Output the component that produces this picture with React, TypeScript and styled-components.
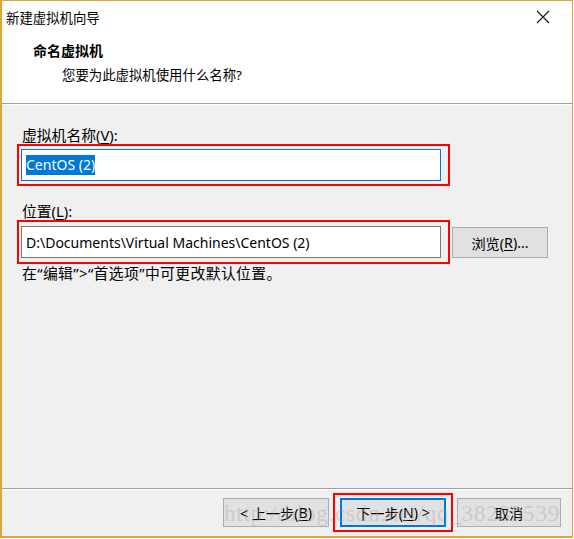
import React from "react";
import styled, { createGlobalStyle } from "styled-components";

const GlobalStyle = createGlobalStyle`
  html, body {
    margin: 0;
    padding: 0;
    background: #ffffff;
  }
  body {
    font-family: "Noto Sans", "Noto Sans CJK SC", sans-serif;
    font-size: 13px;
    color: #000;
  }
`;

const Key = ({ k }: { k: string }) => <U>{k}</U>;

const App = () => {
  return (
    <>
      <GlobalStyle />
      <Window>
        <Header>
          <TitleBar>
            <Title>新建虚拟机向导</Title>
            <CloseBtn>
              <svg width="14" height="14" viewBox="0 0 14 14">
                <path d="M1 1 L13 13 M13 1 L1 13" stroke="#111" strokeWidth="1.1" fill="none" />
              </svg>
            </CloseBtn>
          </TitleBar>
          <Heading>命名虚拟机</Heading>
          <SubHeading>您要为此虚拟机使用什么名称?</SubHeading>
        </Header>

        <Body>
          <Label>
            虚拟机名称(<Key k="V" />):
          </Label>
          <FieldRow>
            <Highlight>
              <TextBox focused>
                <Selected>CentOS (2)</Selected>
              </TextBox>
            </Highlight>
          </FieldRow>

          <Label top={16}>
            位置(<Key k="L" />):
          </Label>
          <FieldRow>
            <Highlight roomy>
              <TextBox>D:\Documents\Virtual Machines\CentOS (2)</TextBox>
            </Highlight>
            <BrowseButton>
              浏览(<Key k="R" />)...
            </BrowseButton>
          </FieldRow>
          <Note>在“编辑”&gt;“首选项”中可更改默认位置。</Note>
        </Body>

        <Footer>
          <Button width={106}>
            &lt; 上一步(<Key k="B" />)
          </Button>
          <Highlight tight>
            <Button width={106} primary>
              下一步(<Key k="N" />) &gt;
            </Button>
          </Highlight>
          <Button width={104}>取消</Button>
          <Watermark>http://blog.csdn.net/qq_38289539</Watermark>
        </Footer>
      </Window>
    </>
  );
};
export default App;

// styled-components -----------------
const Window = styled.div`
  position: relative;
  box-sizing: border-box;
  width: 573px;
  height: 538px;
  border: 1px solid #e8a23a;
  border-left-width: 2px;
  border-bottom-width: 2px;
  background: #f0f0f0;
  display: flex;
  flex-direction: column;
`;

const Header = styled.div`
  background: #fff;
  height: 102px;
  border-bottom: 1px solid #a0a0a0;
  box-shadow: 0 1px 0 #fff;
`;

const TitleBar = styled.div`
  height: 31px;
  display: flex;
  align-items: center;
  justify-content: space-between;
  padding-left: 4px;
`;

const Title = styled.div`
  font-size: 13.4px;
  color: #000;
`;

const CloseBtn = styled.div`
  width: 46px;
  height: 31px;
  display: flex;
  align-items: center;
  justify-content: center;
  margin-right: 6px;
`;

const Heading = styled.div`
  margin: 9px 0 0 31px;
  font-size: 14px;
  font-weight: bold;
  line-height: 20px;
`;

const SubHeading = styled.div`
  margin: 4px 0 0 60px;
  font-size: 13.4px;
  line-height: 20px;
`;

const Body = styled.div`
  flex: 1;
  padding: 22px 0 0 15px;
  display: flex;
  flex-direction: column;
`;

const Label = styled.div<{ top?: number }>`
  margin: ${(p) => p.top || 0}px 0 0 5px;
  font-size: 14.8px;
  line-height: 18px;
`;

const FieldRow = styled.div`
  display: flex;
  align-items: flex-start;
  gap: 2px;
`;

const Highlight = styled.div<{ tight?: boolean; roomy?: boolean }>`
  border: 2px solid #ff0000;
  padding: ${(p) => (p.tight ? "3px 5px" : p.roomy ? "4px 7px 4px 2px" : "3px 7px 3px 2px")};
  display: flex;
`;

const TextBox = styled.div<{ focused?: boolean }>`
  box-sizing: border-box;
  width: 420px;
  height: 32px;
  background: #fff;
  border: 1px solid ${(p) => (p.focused ? "#0078d7" : "#7a7a7a")};
  padding: 0 4px;
  display: flex;
  align-items: center;
  font-size: 14px;
  white-space: nowrap;
`;

const Selected = styled.span`
  background: #0078d7;
  color: #fff;
  line-height: 20px;
`;

const Button = styled.div<{ width: number; primary?: boolean }>`
  box-sizing: border-box;
  width: ${(p) => p.width}px;
  height: 29px;
  background: #e1e1e1;
  border: ${(p) => (p.primary ? "2px solid #0078d7" : "1px solid #adadad")};
  display: flex;
  align-items: center;
  justify-content: center;
  font-size: 14.2px;
  color: #000;
`;

const BrowseButton = styled(Button).attrs({ width: 96 })`
  height: 31px;
  margin-top: 7px;
`;

const Note = styled.div`
  margin: 0 0 0 5px;
  font-size: 14.8px;
  line-height: 18px;
  letter-spacing: 0.4px;
`;

const Footer = styled.div`
  position: relative;
  height: 47px;
  border-top: 1px solid #a0a0a0;
  box-shadow: inset 0 1px 0 #fff;
  display: flex;
  align-items: center;
  justify-content: flex-end;
  gap: 4px;
  padding-right: 11px;
`;

const Watermark = styled.div`
  position: absolute;
  right: 12px;
  top: 12px;
  font-family: "Liberation Serif", serif;
  font-size: 23px;
  letter-spacing: 0.8px;
  color: rgba(160, 160, 160, 0.35);
  pointer-events: none;
`;

const U = styled.span`
  text-decoration: underline;
  text-underline-offset: 2px;
`;
